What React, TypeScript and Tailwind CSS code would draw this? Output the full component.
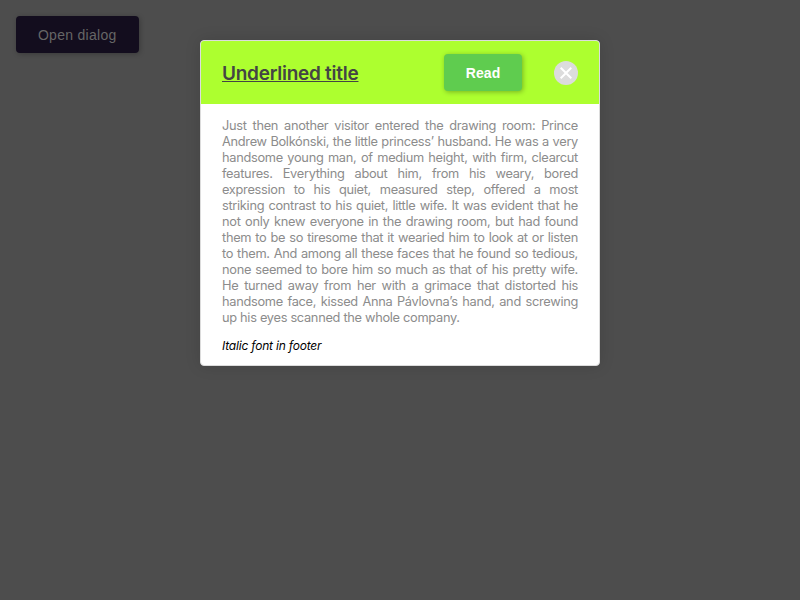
const lines = [
  "Just then another visitor entered the drawing room: Prince",
  "Andrew Bolkónski, the little princess’ husband. He was a very",
  "handsome young man, of medium height, with firm, clearcut",
  "features. Everything about him, from his weary, bored",
  "expression to his quiet, measured step, offered a most",
  "striking contrast to his quiet, little wife. It was evident that he",
  "not only knew everyone in the drawing room, but had found",
  "them to be so tiresome that it wearied him to look at or listen",
  "to them. And among all these faces that he found so tedious,",
  "none seemed to bore him so much as that of his pretty wife.",
  "He turned away from her with a grimace that distorted his",
  "handsome face, kissed Anna Pávlovna’s hand, and screwing",
];

export default function App() {
  return (
    <div className="relative h-[600px] w-[800px] overflow-hidden bg-[#4d4d4d] p-4 font-['Inter',sans-serif]">
      <button className="block h-[37px] w-[122.5px] rounded bg-[#130d1e] pt-px font-['Liberation_Sans',Arial,sans-serif] text-[14px] tracking-[0.28px] text-[#666] shadow-[1px_1px_5px_rgba(0,0,0,0.25)]">
        Open dialog
      </button>
      <section className="absolute left-[200px] top-10 h-[326px] w-[400px] overflow-hidden rounded border border-[#dcdcdc] bg-white shadow-[0_0_16px_rgba(0,0,0,0.12)]">
        <header className="flex h-[63px] items-center bg-[#adff2f] pl-[21px] pr-[21px]">
          <h1 className="flex-1 pt-[3px] text-[19px] font-semibold tracking-[-0.26px] text-[#444] underline">Underlined title</h1>
          <button className="mr-8 h-[37px] w-[78px] rounded bg-[#5fcc4f] pt-px font-['Liberation_Sans',Arial,sans-serif] text-[14px] font-bold tracking-[0.1px] text-white shadow-[1px_1px_5px_rgba(0,0,0,0.3)]">
            Read
          </button>
          <button className="flex size-6 items-center justify-center rounded-full bg-[#dcdcdc]">
            <svg width="12" height="12" viewBox="0 0 12 12" fill="none" stroke="white" strokeWidth="2">
              <path d="M0.7 0.7L11.3 11.3M11.3 0.7L0.7 11.3" />
            </svg>
          </button>
        </header>
        <div className="px-[21px] pt-[14px] text-[12.8px] leading-4 tracking-[-0.3px] text-[#8c8c8c]">
          {lines.map((line) => (
            <div key={line} className="whitespace-nowrap [text-align-last:justify]">{line}</div>
          ))}
          <div>up his eyes scanned the whole company.</div>
        </div>
        <footer className="px-[21px] pt-3 text-[12px] italic leading-4 tracking-[-0.2px] text-black">Italic font in footer</footer>
      </section>
    </div>
  );
}
